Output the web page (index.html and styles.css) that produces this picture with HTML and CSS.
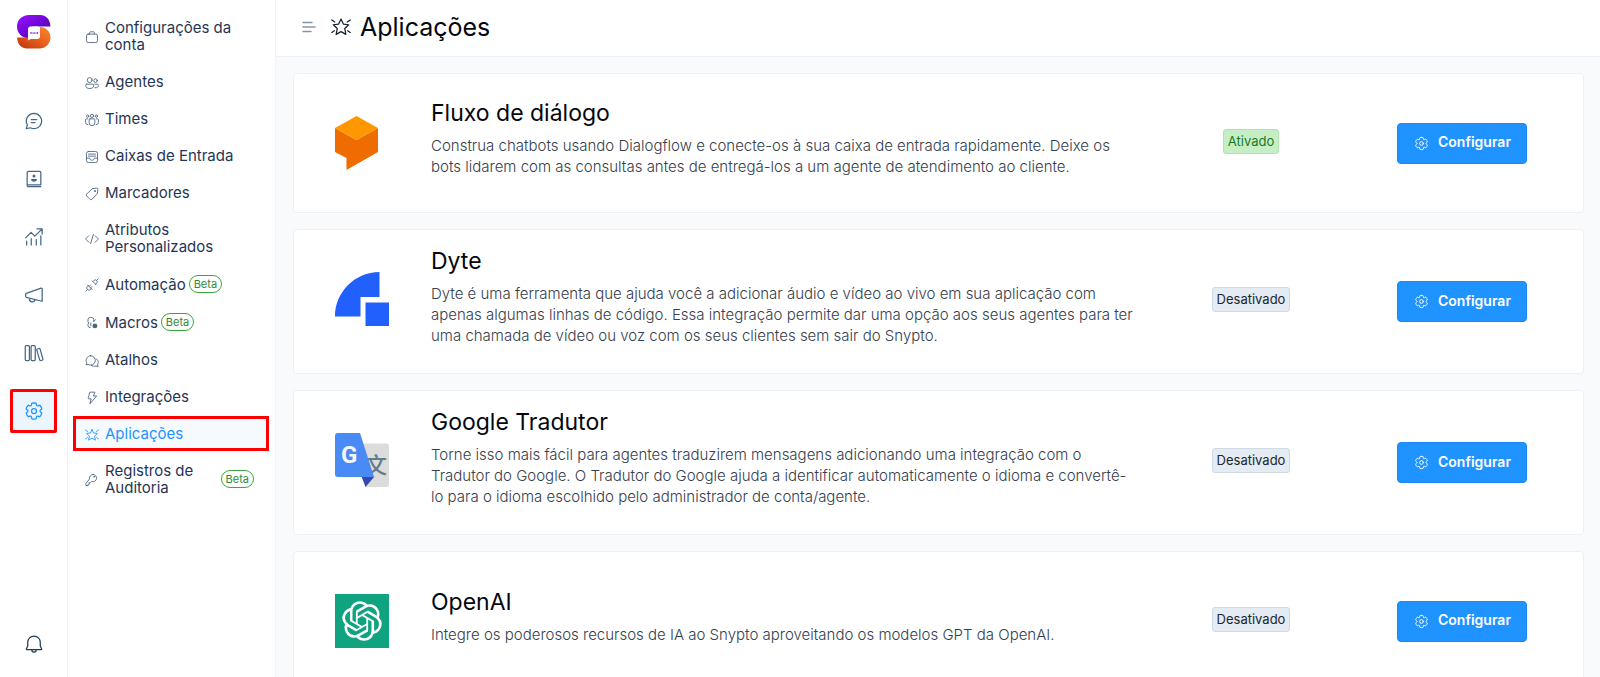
FILE: index.html
```html
<!DOCTYPE html>
<html lang="pt-BR">
<head>
  <meta charset="UTF-8" />
  <meta name="viewport" content="width=device-width, initial-scale=1" />
  <title>Aplicações</title>
  <link rel="stylesheet" href="styles.css">
</head>
<body>
  <!-- Shared icons -->
  <svg class="sprite" aria-hidden="true">
    <symbol id="icon-settings" viewBox="0 0 24 24">
      <path d="M12.012 2.25c.734.008 1.465.093 2.182.253a.75.75 0 0 1 .582.649l.17 1.527a1.384 1.384 0 0 0 1.927 1.116l1.401-.615a.75.75 0 0 1 .85.174 9.792 9.792 0 0 1 2.204 3.792.75.75 0 0 1-.271.825l-1.242.916a1.381 1.381 0 0 0 0 2.226l1.243.915a.75.75 0 0 1 .272.826 9.797 9.797 0 0 1-2.204 3.792.75.75 0 0 1-.848.175l-1.407-.617a1.38 1.38 0 0 0-1.926 1.114l-.169 1.526a.75.75 0 0 1-.572.647 9.518 9.518 0 0 1-4.406 0 .75.75 0 0 1-.572-.647l-.168-1.524a1.382 1.382 0 0 0-1.926-1.11l-1.406.616a.75.75 0 0 1-.849-.175 9.798 9.798 0 0 1-2.204-3.796.75.75 0 0 1 .272-.826l1.243-.916a1.38 1.38 0 0 0 0-2.226l-1.243-.914a.75.75 0 0 1-.271-.826 9.793 9.793 0 0 1 2.204-3.792.75.75 0 0 1 .85-.174l1.4.615a1.387 1.387 0 0 0 1.93-1.118l.17-1.526a.75.75 0 0 1 .583-.65c.717-.159 1.45-.243 2.201-.252Z"/>
      <circle cx="12" cy="12" r="3"/>
    </symbol>
    <symbol id="icon-star" viewBox="0 0 24 24">
      <path d="M12 2.500l2.800 6 6.400.8-4.700 4.500 1.300 7L12 17.500l-5.800 3.300 1.300-7-4.700-4.500 6.400-.8z"/>
      <path d="M1 3.500L4.500 6M23 3.500L19.500 6M1 18.500L4 16.500M23 18.500L20 16.500"/>
    </symbol>
  </svg>

  <div class="app">
    <aside class="rail">
      <a href="#" class="brand" aria-label="Snypto">
        <svg viewBox="0 0 34 34">
          <defs>
            <linearGradient id="purple" x1="0" y1="0" x2="1" y2="1">
              <stop offset="0" stop-color="#9b12ff"/><stop offset=".5" stop-color="#6f06d6"/><stop offset="1" stop-color="#3d0590"/>
            </linearGradient>
            <linearGradient id="orange" x1="0" y1="1" x2="1" y2="0">
              <stop offset="0" stop-color="#b8330a"/><stop offset=".5" stop-color="#e85d1c"/><stop offset="1" stop-color="#fb8a35"/>
            </linearGradient>
          </defs>
          <path fill="url(#purple)" d="M12 0h11c6 0 10 4 10.500 11.500H17c-3 0-5.500 2-5.500 5v7C5 23 0 18 0 11.800 0 5 5 0 12 0z"/>
          <path fill="url(#orange)" d="M33.500 22.500c0 6-5 11-11 11H10C4.500 33.500.5 29.500 0 22.500h16c4 0 7-2 7-6V12c6 0 10.500 4.500 10.500 10.500z"/>
          <path fill="#fff" d="M14 11.500h6.500a2.500 2.500 0 0 1 2.500 2.500v7a3 3 0 0 1-3 3h-6.500l-2.500 1.500V14a2.500 2.500 0 0 1 3-2.500z"/>
          <path stroke="#8a4bd8" stroke-width=".8" d="M13.500 18h7.500"/>
          <circle cx="14" cy="18" r=".7" fill="#5a0ac0"/><circle cx="17.200" cy="18" r=".6" fill="#5a0ac0"/><circle cx="20.500" cy="18" r=".7" fill="#5a0ac0"/>
        </svg>
      </a>
      <nav class="rail-nav">
        <a href="#" aria-label="Conversas"><svg class="icon" viewBox="0 0 24 24"><path d="M12 2.800a9.200 9.200 0 1 1-4.400 17.300L2.800 21.300l1.200-4.800A9.200 9.200 0 0 1 12 2.800zM8.700 10.300h6.600M8.700 13.800h4.500"/></svg></a>
        <a href="#" aria-label="Contatos"><svg class="icon" viewBox="0 0 24 24"><path d="M20.200 19V4.300A1.500 1.500 0 0 0 18.700 2.800H5.300A1.500 1.500 0 0 0 3.800 4.300v15.400a1.500 1.500 0 0 0 1.500 1.500h14.900M3.800 19h16.400"/><circle class="solid" cx="12" cy="8.500" r="1.800"/><path class="solid" d="M8.500 12h7c0 2.300-1.500 3.200-3.500 3.200S8.500 14.300 8.500 12z"/></svg></a>
        <a href="#" aria-label="Relatórios"><svg class="icon" viewBox="0 0 24 24"><path d="M3.200 21.500V17M8.700 21.500v-7.500M14.700 21.500V15M20.200 21.500v-11M2 13l6.500-6.500 4.500 4.500 8.500-8.500M15.500 2.200h6.300v6.300"/></svg></a>
        <a href="#" aria-label="Campanhas"><svg class="icon" viewBox="0 0 24 24"><path d="M21.800 4.500v15L2.800 14.800A1.200 1.200 0 0 1 2 13.600v-2.400a1.200 1.200 0 0 1 .8-1.100L20.500 3.800a1 1 0 0 1 1.300.9zM6.500 16v.800a3.500 3.500 0 0 0 6.900.8"/></svg></a>
        <a href="#" aria-label="Central de ajuda"><svg class="icon" viewBox="0 0 24 24"><rect x="1.500" y="3" width="5" height="18" rx="1.200"/><rect x="8.500" y="3" width="5" height="18" rx="1.200"/><path d="M15.800 7.200l2.300-.6a1 1 0 0 1 1.200.7l3.400 12a1 1 0 0 1-.7 1.200l-2 .5a1 1 0 0 1-1.200-.7l-3.500-12a1 1 0 0 1 .5-1.100z"/></svg></a>
        <a href="#" class="active" aria-label="Configurações"><svg class="icon"><use href="#icon-settings"/></svg></a>
      </nav>
      <a href="#" class="bell" aria-label="Notificações"><svg class="icon" viewBox="0 0 24 24"><path d="M12 2.500a7.500 7.500 0 0 1 7.500 7.500v4.500l1.600 3.300a.7.7 0 0 1-.6 1H3.500a.7.7 0 0 1-.6-1l1.600-3.300V10A7.500 7.500 0 0 1 12 2.500zM9.300 19a2.700 2.700 0 0 0 5.400 0"/></svg></a>
    </aside>

    <nav class="menu">
      <a href="#"><svg class="icon" viewBox="0 0 24 24"><rect x="2.500" y="7" width="19" height="14.500" rx="3"/><path d="M8 7V4.500A1.500 1.500 0 0 1 9.500 3h5A1.500 1.500 0 0 1 16 4.500V7"/></svg><span>Configurações da conta</span></a>
      <a href="#"><svg class="icon" viewBox="0 0 24 24"><circle cx="8" cy="7" r="4.200"/><circle cx="18" cy="8" r="3"/><path d="M3 14h10a2 2 0 0 1 2 2c0 4-3 5.500-7 5.500S1.200 20 1.200 16A2 2 0 0 1 3 14zM17 14h4a2 2 0 0 1 2 2c0 3-2 4.500-6 4.200"/></svg><span>Agentes</span></a>
      <a href="#"><svg class="icon" viewBox="0 0 24 24"><circle cx="12" cy="5" r="2.800"/><circle cx="4.500" cy="5.500" r="2"/><circle cx="19.500" cy="5.500" r="2"/><path d="M8.500 10h7a1.300 1.300 0 0 1 1.300 1.300V17a4.800 4.800 0 0 1-9.600 0v-5.700A1.300 1.300 0 0 1 8.500 10zM4.500 10H2.300A1.300 1.300 0 0 0 1 11.300V16a4 4 0 0 0 4 4M19.500 10h2.200a1.300 1.300 0 0 1 1.300 1.300V16a4 4 0 0 1-4 4"/></svg><span>Times</span></a>
      <a href="#"><svg class="icon" viewBox="0 0 24 24"><rect x="2.500" y="2.500" width="19" height="19" rx="3.500"/><path d="M2.500 14H8c.5 2.500 2 3.500 4 3.500s3.500-1 4-3.500h5.500M6 7h12M6 10.500h12"/></svg><span>Caixas de Entrada</span></a>
      <a href="#"><svg class="icon" viewBox="0 0 24 24"><path d="M13.500 2.700l6.500-.7a1.800 1.800 0 0 1 2 2l-.7 6.500a3 3 0 0 1-1 2l-8.500 8.700a2.300 2.300 0 0 1-3.200 0l-5.700-5.800a2.300 2.300 0 0 1 0-3.200l8.600-8.600a3 3 0 0 1 2-.9z"/><circle cx="17" cy="7" r="1"/></svg><span>Marcadores</span></a>
      <a href="#"><svg class="icon" viewBox="0 0 24 24"><path d="M6.500 6.500L1 12l5.500 5.500M17.500 6.500L23 12l-5.500 5.500M14.500 4l-5 16"/></svg><span>Atributos Personalizados</span></a>
      <a href="#"><svg class="icon" viewBox="0 0 24 24"><path d="M22.500 1.500l-2.500 2.500M12.500 5l6.500 6.500M13.500 6l1.800-1.800a3.300 3.300 0 0 1 4.700 4.700L18 10.500M1.500 22.500L4 20M4.500 12l7.500 7.500M5.500 13l-1.500 1.500a3.600 3.600 0 0 0 5.200 5.200L11 18.500M7 14.500l2.500-2.500M9.500 17l2.500-2.500"/></svg><span>Automação</span><em class="beta">Beta</em></a>
      <a href="#"><svg class="icon" viewBox="0 0 24 24"><path d="M15 9V6a3.500 3.500 0 0 0-3.500-3.500H9A4 4 0 0 0 5 6.500V9a3 3 0 0 0 2 3 3 3 0 0 0-2 3v1a4 4 0 0 0 4 4M15 9l3-2.500"/><circle class="solid" cx="17" cy="17" r="4.200"/><path d="M10 12v5"/></svg><span>Macros</span><em class="beta">Beta</em></a>
      <a href="#"><svg class="icon" viewBox="0 0 24 24"><path d="M9.500 3a8 8 0 1 1-4 14.800L2 18.700l1-3.500A8 8 0 0 1 9.500 3zM19 8c4.500 3 4.500 7 2.500 9.500l1 4-3.800-1c-2.700 1-5.700.700-7.700-.8"/></svg><span>Atalhos</span></a>
      <a href="#"><svg class="icon" viewBox="0 0 24 24"><path d="M9 2h8l-2.500 6.500H20L8.500 22l2-8.500H6.500a1 1 0 0 1-1-1.200z"/></svg><span>Integrações</span></a>
      <a href="#" class="active"><svg class="icon"><use href="#icon-star"/></svg><span>Aplicações</span></a>
      <a href="#"><svg class="icon" viewBox="0 0 24 24"><path d="M13.500 2.500a6.200 6.200 0 1 1-2 12l-2 2H7.500v2.500H5.500v2.500h-4V18l6.200-7.700a6.200 6.200 0 0 1 5.800-7.800z"/><circle cx="15.500" cy="6.500" r=".7"/></svg><span>Registros de Auditoria</span><em class="beta">Beta</em></a>
    </nav>

    <main class="main">
      <header class="header">
        <button class="collapse" type="button" aria-label="Recolher menu">
          <svg class="icon" viewBox="0 0 14 12"><path d="M1 1.500h9M1 6h12M1 10.500h8"/></svg>
        </button>
        <svg class="icon header-icon"><use href="#icon-star"/></svg>
        <h1>Aplicações</h1>
      </header>

      <section class="cards">
        <article class="card">
          <svg class="logo" viewBox="0 0 54 54">
            <path fill="#ef6c00" d="M0 12l21.500 12L43 12v24L11.500 54V42L0 36z"/>
            <path fill="#ff9800" d="M21.500 0L43 12 21.500 24 0 12z"/>
          </svg>
          <div class="info">
            <h2>Fluxo de diálogo</h2>
            <p>Construa chatbots usando Dialogflow e conecte-os à sua caixa de entrada rapidamente. Deixe os bots lidarem com as consultas antes de entregá-los a um agente de atendimento ao cliente.</p>
          </div>
          <span class="status on">Ativado</span>
          <button class="configure" type="button"><svg class="icon"><use href="#icon-settings"/></svg><span>Configurar</span></button>
        </article>

        <article class="card">
          <svg class="logo" viewBox="0 0 54 54">
            <path fill="#2160fd" d="M44.500 0v25H25.500v19.500H0C0 20 20 0 44.500 0zM30.500 30.500H54V54H30.500z"/>
          </svg>
          <div class="info">
            <h2>Dyte</h2>
            <p>Dyte é uma ferramenta que ajuda você a adicionar áudio e vídeo ao vivo em sua aplicação com apenas algumas linhas de código. Essa integração permite dar uma opção aos seus agentes para ter uma chamada de vídeo ou voz com os seus clientes sem sair do Snypto.</p>
          </div>
          <span class="status">Desativado</span>
          <button class="configure" type="button"><svg class="icon"><use href="#icon-settings"/></svg><span>Configurar</span></button>
        </article>

        <article class="card">
          <svg class="logo" viewBox="0 0 54 54">
            <path fill="#dcdcdc" d="M20 10.500h31a3 3 0 0 1 3 3V51a3 3 0 0 1-3 3H30.500z"/>
            <text class="logo-han" x="30" y="40">文</text>
            <path fill="#3949ab" d="M26.500 43.500L30.500 54l9-10.500z"/>
            <path fill="#4a8af4" d="M3 0h22l14 44H3a3 3 0 0 1-3-3V3a3 3 0 0 1 3-3z"/>
            <text class="logo-g" x="6" y="30">G</text>
          </svg>
          <div class="info">
            <h2>Google Tradutor</h2>
            <p>Torne isso mais fácil para agentes traduzirem mensagens adicionando uma integração com o Tradutor do Google. O Tradutor do Google ajuda a identificar automaticamente o idioma e convertê-lo para o idioma escolhido pelo administrador de conta/agente.</p>
          </div>
          <span class="status">Desativado</span>
          <button class="configure" type="button"><svg class="icon"><use href="#icon-settings"/></svg><span>Configurar</span></button>
        </article>

        <article class="card">
          <svg class="logo" viewBox="0 0 54 54">
            <path fill="#10a37f" d="M0 0h54v54H0z"/>
            <path fill="#fff" transform="translate(7.200 7.200) scale(1.650)" d="M22.2819 9.8211a5.9847 5.9847 0 0 0-.5157-4.9108 6.0462 6.0462 0 0 0-6.5098-2.9A6.0651 6.0651 0 0 0 4.9807 4.1818a5.9847 5.9847 0 0 0-3.9977 2.9 6.0462 6.0462 0 0 0 .7427 7.0966 5.98 5.98 0 0 0 .511 4.9107 6.051 6.051 0 0 0 6.5146 2.9001A5.9847 5.9847 0 0 0 13.2599 24a6.0557 6.0557 0 0 0 5.7718-4.2058 5.9894 5.9894 0 0 0 3.9977-2.9001 6.0557 6.0557 0 0 0-.7475-7.0729zm-9.022 12.6081a4.4755 4.4755 0 0 1-2.8764-1.0408l.1419-.0804 4.7783-2.7582a.7948.7948 0 0 0 .3927-.6813v-6.7369l2.02 1.1686a.071.071 0 0 1 .038.052v5.5826a4.504 4.504 0 0 1-4.4945 4.4944zm-9.6607-4.1254a4.4708 4.4708 0 0 1-.5346-3.0137l.142.0852 4.783 2.7582a.7712.7712 0 0 0 .7806 0l5.8428-3.3685v2.3324a.0804.0804 0 0 1-.0332.0615L9.74 19.9502a4.4992 4.4992 0 0 1-6.1408-1.6464zM2.3408 7.8956a4.485 4.485 0 0 1 2.3655-1.9728V11.6a.7664.7664 0 0 0 .3879.6765l5.8144 3.3543-2.0201 1.1685a.0757.0757 0 0 1-.071 0l-4.8303-2.7865A4.504 4.504 0 0 1 2.3408 7.872zm16.5963 3.8558L13.1038 8.364 15.1192 7.2a.0757.0757 0 0 1 .071 0l4.8303 2.7913a4.4944 4.4944 0 0 1-.6765 8.1042v-5.6772a.79.79 0 0 0-.407-.667zm2.0107-3.0231l-.142-.0852-4.7735-2.7818a.7759.7759 0 0 0-.7854 0L9.409 9.2297V6.8974a.0662.0662 0 0 1 .0284-.0615l4.8303-2.7866a4.4992 4.4992 0 0 1 6.6802 4.66zM8.3065 12.863l-2.02-1.1638a.0804.0804 0 0 1-.038-.0567V6.0742a4.4992 4.4992 0 0 1 7.3757-3.4537l-.142.0805L8.704 5.459a.7948.7948 0 0 0-.3927.6813zm1.0976-2.3654l2.602-1.4998 2.6069 1.4998v2.9994l-2.5974 1.4997-2.6067-1.4997Z"/>
          </svg>
          <div class="info">
            <h2>OpenAI</h2>
            <p>Integre os poderosos recursos de IA ao Snypto aproveitando os modelos GPT da OpenAI.</p>
          </div>
          <span class="status">Desativado</span>
          <button class="configure" type="button"><svg class="icon"><use href="#icon-settings"/></svg><span>Configurar</span></button>
        </article>
      </section>
    </main>
  </div>
</body>
</html>
```
FILE: styles.css
```css
* { box-sizing: border-box; }
body {
  margin: 0; font-family: Inter, "Liberation Sans", sans-serif;
  font-size: 15px; color: #151718; background: #fff;
}
a { text-decoration: none; color: inherit; }
button { font-family: inherit; cursor: pointer; }
.sprite { position: absolute; width: 0; height: 0; }
.icon {
  flex: none; fill: none; stroke: currentColor; stroke-width: 1.5;
  stroke-linecap: round; stroke-linejoin: round;
}
.icon .solid { fill: currentColor; stroke: none; }

.app { display: flex; height: 100vh; overflow: hidden; }

/* Icon rail */
.rail {
  flex: none; width: 68px; padding: 15px 0 21px;
  display: flex; flex-direction: column; align-items: center;
  border-right: 1px solid #f0f3f7; color: #446888;
}
.brand svg { display: block; width: 34px; height: 34px; }
.rail-nav {
  display: flex; flex-direction: column; gap: 14px; margin-top: 50px;
}
.rail-nav a, .bell {
  width: 47px; height: 44px;
  display: flex; align-items: center; justify-content: center;
}
.rail-nav .icon, .bell .icon { width: 20px; height: 20px; }
.rail-nav .active {
  color: #1f93ff; background: #ebf5ff; border-radius: 2px;
  outline: 3px solid #ff0000; outline-offset: -3px;
}
.bell { margin-top: auto; height: 24px; color: #1f3d5c; }

/* Settings menu */
.menu {
  flex: none; width: 208px; padding: 11px 7px 0 6px;
  display: flex; flex-direction: column; gap: 4px;
  border-right: 1px solid #f0f3f7;
}
.menu a {
  display: flex; align-items: center;
  padding: 8px 12px 8px 11px; line-height: 17px; color: #1f3655;
}
.menu .icon { width: 14px; height: 14px; margin: 2px 6px 0 0; color: #4b6480; }
.menu .active {
  color: #1f93ff; background: #f5faff;
  outline: 3px solid #ff0000; outline-offset: -2px;
}
.menu .active .icon { color: inherit; }
.beta {
  flex: none; margin: 0 2px 0 3px; padding: 0 4px;
  border: 1px solid #3aa63f; border-radius: 9px;
  font-style: normal; font-size: 11px; line-height: 16px; color: #2f8a35;
}

/* Content */
.main { flex: 1; min-width: 0; background: #f8fafc; }
.header {
  height: 57px; padding: 0 26px 3px;
  display: flex; align-items: center;
  background: #fff; border-bottom: 1px solid #edf1f5;
}
.collapse {
  display: flex; padding: 0; border: 0; background: none; color: #8695a5;
}
.collapse .icon { width: 14px; height: 12px; }
.header-icon { width: 20px; height: 20px; margin: 0 9px 0 15px; color: #151f30; }
.header h1 { margin: 0; font-size: 25px; line-height: 32px; font-weight: 400; color: #05070f; }

.cards {
  display: flex; flex-direction: column; gap: 16px; padding: 16px 16px 16px 17px;
}
.card {
  min-height: 140px; padding: 10px 56px 10px 41px;
  display: grid; grid-template-columns: 54px 1fr 261px 130px;
  align-items: center;
  background: #fff; border: 1px solid #edf1f6; border-radius: 4px;
}
.logo { width: 54px; height: 54px; align-self: start; margin-top: 32px; }
.logo-g { font: 700 24px Roboto, sans-serif; fill: #f4f6fb; }
.logo-han { font: 500 22px "Noto Sans CJK SC", sans-serif; fill: #607d8b; }
.info { padding-left: 42px; }
.info h2 {
  margin: 7px 0 8px; font-size: 23px; line-height: 28px; font-weight: 400; color: #05070f;
}
.info p {
  margin: 0 0 17px; font-size: 15px; line-height: 21px; font-weight: 300; color: #35404e;
}
.status {
  justify-self: center; margin: 0 31px 4px 0; padding: 0 4px 1px;
  border: 1px solid #d0dae5; border-radius: 3px;
  font-size: 13px; line-height: 22px; color: #20262e; background: #e4ebf2;
}
.status.on { color: #1b7a26; background: #c5eec5; border-color: #aee5ae; }
.configure {
  height: 41px; padding: 0 16px;
  display: flex; align-items: center; gap: 9px;
  border: 1px solid #1a88f5; border-radius: 4px;
  background: #1f93ff; color: #fff;
  font-size: 14px; font-weight: 600;
}
.configure .icon { width: 15px; height: 15px; }
.configure span { padding-bottom: 3px; }
```
